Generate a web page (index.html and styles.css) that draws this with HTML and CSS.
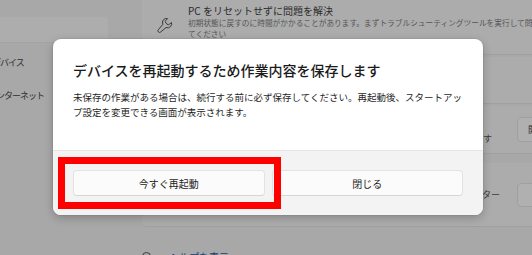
FILE: index.html
```html
<!DOCTYPE html>
<html lang="ja">
<head>
<meta charset="utf-8">
<title>再起動</title>
<link rel="stylesheet" href="styles.css">
</head>
<body>
<div class="app">
  <aside class="nav">
    <div class="search"></div>
    <div class="nav-item nav-devices">とデバイス</div>
    <div class="nav-item nav-net">インターネット</div>
  </aside>
  <main class="content">
    <section class="card card-reset">
      <svg class="wrench" width="16" height="16" viewBox="0 0 16 16" fill="none" stroke="#3a3a3a" stroke-width="1" stroke-linejoin="round">
        <path d="M10.6 1.6 8.9 3.3a1.9 1.9 0 0 0 0 2.7l1.1 1.1a1.9 1.9 0 0 0 2.7 0l1.7-1.7a4 4 0 0 1-5.3 5.1L3.7 15a1.6 1.6 0 0 1-2.3-2.3l4.5-5.4a4 4 0 0 1 4.7-5.7z"/>
      </svg>
      <div class="reset-text">
        <div class="reset-title">PC をリセットせずに問題を解決</div>
        <div class="reset-sub">初期状態に戻すのに時間がかかることがあります。まずトラブルシューティングツールを実行して問題を解決してください</div>
        <div class="reset-sub">てください</div>
      </div>
    </section>
    <section class="card card-row"></section>
    <section class="card card-row card-row2">
      <span class="row-label">ツールを起動します</span>
      <span class="side-btn">開く</span>
    </section>
    <section class="card card-last">
      <span class="row-label">コンピューター</span>
      <span class="side-btn"></span>
    </section>
    <div class="help"><span class="help-icon"></span>ヘルプを表示</div>
  </main>
</div>

<div class="dialog" role="dialog">
  <div class="dialog-body">
    <h1 class="dialog-title">デバイスを再起動するため作業内容を保存します</h1>
    <p class="dialog-text">未保存の作業がある場合は、続行する前に必ず保存してください。再起動後、スタートアッ<br>プ設定を変更できる画面が表示されます。</p>
  </div>
  <div class="dialog-footer">
    <button class="btn">今すぐ再起動</button>
    <button class="btn">閉じる</button>
  </div>
</div>

<div class="highlight"></div>
</body>
</html>
```

FILE: styles.css
```css
* { box-sizing: border-box; }

html, body {
  margin: 0;
  padding: 0;
  width: 532px;
  height: 255px;
  overflow: hidden;
}

body {
  position: relative;
  background: #a8a8a8;
  font-family: "Noto Sans CJK JP", "Noto Sans", sans-serif;
  color: #2e2e2e;
}

.app {
  display: flex;
  height: 255px;
}

.nav {
  width: 142px;
  flex: none;
  overflow: hidden;
  padding-top: 17px;
}

.search {
  width: 108px;
  height: 26px;
  background: #adadad;
  border-radius: 0 4px 4px 0;
  border-bottom: 1px solid #a4a4a4;
}

.nav-item {
  font-size: 9px;
  line-height: 14px;
  letter-spacing: -1px;
  white-space: nowrap;
  color: #2f2f2f;
}

.nav-devices {
  margin-top: 13px;
  margin-left: -16px;
}

.nav-net {
  margin-top: 19px;
  margin-left: -12px;
}

.content {
  flex: 1;
  display: flex;
  flex-direction: column;
  gap: 2px;
  overflow: hidden;
}

.card {
  width: 420px;
  flex: none;
  background: #acacac;
  border-radius: 4px;
  border-bottom: 1px solid #a0a0a0;
}

.card-reset {
  height: 55px;
  border-radius: 0 0 4px 4px;
  display: flex;
  align-items: flex-start;
  padding: 4px 0 0 15px;
}

.wrench {
  margin-top: 13px;
  flex: none;
}

.reset-text {
  margin-left: 15px;
  overflow: hidden;
  white-space: nowrap;
  width: 360px;
}

.reset-title {
  font-size: 10px;
  line-height: 13px;
  color: #2b2b2b;
}

.reset-sub {
  font-size: 7.7px;
  line-height: 11px;
  color: #555;
}

.card-row {
  height: 47px;
}

.card-row2 {
  height: 48px;
  display: flex;
  align-items: center;
  justify-content: flex-end;
  gap: 25px;
  padding-right: 15px;
}

.card-last {
  margin-top: 7px;
  height: 64px;
  display: flex;
  align-items: center;
  justify-content: flex-end;
  gap: 17px;
  padding-right: 15px;
}

.row-label {
  font-size: 9px;
  color: #3a3a3a;
  white-space: nowrap;
}

.card-row2 .row-label { margin-top: 18px; }

.side-btn {
  flex: none;
  width: 30px;
  height: 25px;
  background: #b0b0b0;
  border: 1px solid #9f9f9f;
  border-radius: 4px;
  font-size: 9px;
  line-height: 23px;
  padding-left: 10px;
  color: #2a2a2a;
  overflow: hidden;
  white-space: nowrap;
}

.card-last .side-btn { height: 24px; }

.help {
  margin-top: 20px;
  display: flex;
  align-items: center;
  gap: 18px;
  font-size: 10px;
  color: #1c3f6a;
  white-space: nowrap;
}

.help-icon {
  width: 9px;
  height: 9px;
  border: 1px solid #3a3a3a;
  border-radius: 50%;
}

/* dialog */
.dialog {
  position: absolute;
  left: 53px;
  top: 39px;
  width: 430px;
  height: 176px;
  background: #fff;
  border-radius: 8px;
  box-shadow: 0 3px 10px rgba(0, 0, 0, 0.22), 0 0 0 1px rgba(0, 0, 0, 0.05);
  display: flex;
  flex-direction: column;
  overflow: hidden;
}

.dialog-body {
  height: 111px;
  padding: 21px 20px 0;
}

.dialog-title {
  margin: 0;
  font-size: 14px;
  font-weight: 500;
  line-height: 20px;
  color: #1b1b1b;
  white-space: nowrap;
}

.dialog-text {
  margin: 10px 0 0;
  font-size: 9.5px;
  line-height: 15px;
  color: #1f1f1f;
  white-space: nowrap;
}

.dialog-footer {
  flex: 1;
  background: #f3f3f3;
  border-top: 1px solid #e6e6e6;
  display: flex;
  gap: 7px;
  padding: 19px 20px 0;
}

.btn {
  flex: 1;
  height: 26px;
  background: #fbfbfb;
  border: 1px solid #e3e3e3;
  border-bottom-color: #d6d6d6;
  border-radius: 4px;
  font-family: inherit;
  font-size: 10px;
  color: #1b1b1b;
  padding: 0;
}

/* annotation */
.highlight {
  position: absolute;
  left: 58px;
  top: 157px;
  width: 223px;
  height: 52px;
  border: 7px solid #ff0000;
}
```
